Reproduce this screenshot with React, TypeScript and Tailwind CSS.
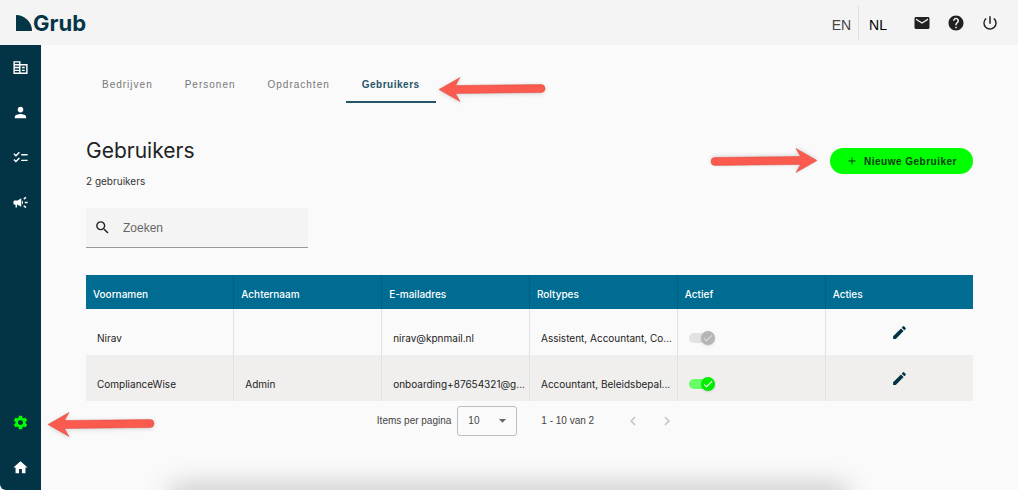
import { useState } from 'react';
import {
    MdAdd,
    MdArrowDropDown,
    MdCampaign,
    MdCheck,
    MdChecklist,
    MdChevronLeft,
    MdChevronRight,
    MdCorporateFare,
    MdEdit,
    MdEmail,
    MdHelp,
    MdHome,
    MdPerson,
    MdPowerSettingsNew,
    MdSearch,
    MdSettings,
} from 'react-icons/md';

const topItems = [
    { label: 'Bedrijven', icon: <MdCorporateFare /> },
    { label: 'Personen', icon: <MdPerson /> },
    { label: 'Opdrachten', icon: <MdChecklist /> },
    { label: 'Meldingen', icon: <MdCampaign /> },
];

const tabs = ['Bedrijven', 'Personen', 'Opdrachten', 'Gebruikers'];

const columns = ['Voornamen', 'Achternaam', 'E-mailadres', 'Roltypes', 'Actief', 'Acties'];

const users = [
    { first: 'Nirav', last: '', email: 'nirav@kpnmail.nl', roles: 'Assistent, Accountant, Co...', locked: true },
    {
        first: 'ComplianceWise',
        last: 'Admin',
        email: 'onboarding+87654321@g...',
        roles: 'Accountant, Beleidsbepal...',
        locked: false,
    },
];

function Arrow({ className }: { className: string }) {
    return (
        <svg viewBox="0 0 108 28" className={`h-7 w-[108px] drop-shadow-sm ${className}`} aria-hidden="true">
            <path
                d="M1 14.5 22 2.5 17.5 10.5 103 9.5a3.8 3.8 0 0 1 0 8L17.5 18.5 22 26.5Z"
                fill="#fb5a4e"
                stroke="#d9483f"
                strokeWidth="0.5"
            />
        </svg>
    );
}

function Header() {
    return (
        <header className="flex h-[45px] items-center justify-between bg-[#f4f4f4] pl-4 pr-[19px] text-[#212121]">
            <a href="#" className="flex items-center gap-px text-[#053647]">
                <svg viewBox="0 0 16 16" className="size-4" aria-hidden="true">
                    <path d="M0 0A16 16 0 0 1 16 16H0Z" fill="currentColor" />
                </svg>
                <span className="text-[22px] font-bold leading-6">Grub</span>
            </a>
            <div className="flex items-center">
                <div className="mr-[26px] flex items-center font-['Liberation_Sans',sans-serif] text-sm">
                    <button className="pr-[7px] pt-1 text-[#444]">EN</button>
                    <span className="h-[34px] w-px bg-[#e0e0e0]" />
                    <button className="pl-2.5 pt-1 text-black">NL</button>
                </div>
                <div className="flex gap-4 text-lg">
                    <button aria-label="Berichten">
                        <MdEmail />
                    </button>
                    <button aria-label="Help">
                        <MdHelp />
                    </button>
                    <button aria-label="Uitloggen">
                        <MdPowerSettingsNew />
                    </button>
                </div>
            </div>
        </header>
    );
}

function SideItem({ label, children, active }: { label: string; children: React.ReactNode; active?: boolean }) {
    return (
        <a
            href="#"
            aria-label={label}
            className={`flex h-[45px] items-center justify-center text-[17px] ${active ? 'text-[#00ff00]' : 'text-white'}`}
        >
            {children}
        </a>
    );
}

function Sidebar() {
    return (
        <nav className="flex w-[41px] shrink-0 flex-col justify-between rounded-bl-md bg-[#033445] pr-px">
            <div>
                {topItems.map((item) => (
                    <SideItem key={item.label} label={item.label}>
                        {item.icon}
                    </SideItem>
                ))}
            </div>
            <div className="relative">
                <SideItem label="Instellingen" active>
                    <MdSettings />
                </SideItem>
                <Arrow className="absolute left-[47px] top-2.5" />
                <SideItem label="Home">
                    <MdHome />
                </SideItem>
            </div>
        </nav>
    );
}

function Tabs() {
    return (
        <div className="flex items-end font-['Liberation_Sans',sans-serif] text-[10px] leading-4">
            <div role="tablist" className="flex">
                {tabs.map((tab) => (
                    <button
                        key={tab}
                        role="tab"
                        aria-selected={tab === 'Gebruikers'}
                        className={`border-b-2 px-4 pb-2 ${
                            tab === 'Gebruikers'
                                ? 'border-[#265569] font-bold tracking-wider text-[#265569]'
                                : 'border-transparent tracking-[1px] text-[#777]'
                        }`}
                    >
                        {tab}
                    </button>
                ))}
            </div>
            <Arrow className="ml-0.5" />
        </div>
    );
}

function Toggle({ name, locked }: { name: string; locked: boolean }) {
    const [on, setOn] = useState(true);
    return (
        <label className="relative flex h-4 w-[26px] items-center">
            <input
                type="checkbox"
                checked={on}
                disabled={locked}
                onChange={() => setOn(!on)}
                aria-label={`${name} actief`}
                className="h-2.5 w-full appearance-none rounded-full bg-[#66ff66] disabled:bg-[#e2e2e2]"
            />
            <span
                className={`absolute flex size-3.5 items-center justify-center rounded-full text-xs shadow-sm ${
                    on ? 'right-0' : 'left-0'
                } ${locked ? 'bg-[#b5b5b5] text-[#dedede]' : 'bg-[#00ec00] text-white'}`}
            >
                <MdCheck />
            </span>
        </label>
    );
}

function UsersTable() {
    return (
        <table className="mt-[27px] w-full table-fixed border-collapse text-left text-[10px] leading-4">
            <thead>
                <tr className="h-[34px] bg-[#006c92] text-white">
                    {columns.map((column) => (
                        <th key={column} className="border-r border-[#00617f] px-[7px] pt-1 font-medium last:border-r-0">
                            {column}
                        </th>
                    ))}
                </tr>
            </thead>
            <tbody className="text-[#222]">
                {users.map((user) => (
                    <tr key={user.first} className="h-[46px] even:bg-[#f0efee] [&>td]:border-r [&>td]:border-[#e2e2e2] [&>td:last-child]:border-r-0">
                        {[user.first, user.last, user.email, user.roles].map((text, i) => (
                            <td key={i} className="truncate pl-[11px] pt-3">
                                {text}
                            </td>
                        ))}
                        <td className="pl-[11px] pt-3">
                            <Toggle name={user.first} locked={user.locked} />
                        </td>
                        <td className="text-center">
                            <button aria-label={`${user.first} bewerken`} className="align-middle text-[17px] text-[#033445]">
                                <MdEdit />
                            </button>
                        </td>
                    </tr>
                ))}
            </tbody>
        </table>
    );
}

function Pagination() {
    return (
        <div className="mt-[5px] flex items-center justify-center font-['Liberation_Sans',sans-serif] text-[10px] leading-3 text-[#444]">
            <label htmlFor="page-size">Items per pagina</label>
            <div className="relative ml-1.5">
                <select
                    id="page-size"
                    className="h-[30px] w-[60px] appearance-none rounded-[3px] border border-[#bdbdbd] bg-transparent pl-2.5"
                >
                    <option>10</option>
                </select>
                <MdArrowDropDown className="pointer-events-none absolute right-1.5 top-1.5 text-[17px] text-[#666]" />
            </div>
            <span className="ml-6">1 - 10 van 2</span>
            <button disabled aria-label="Vorige pagina" className="ml-[30px] text-[18px] text-[#c4c4c4]">
                <MdChevronLeft />
            </button>
            <button disabled aria-label="Volgende pagina" className="ml-4 mr-1.5 text-[18px] text-[#c4c4c4]">
                <MdChevronRight />
            </button>
        </div>
    );
}

export default function App() {
    return (
        <div className="flex min-h-screen bg-white pb-[7px] pr-1.5 font-['Inter',sans-serif]">
            <div className="relative flex flex-1 flex-col overflow-hidden bg-[#fafafa]">
                <Header />
                <div className="flex flex-1">
                    <Sidebar />
                    <main className="min-w-0 flex-1 px-[45px] pt-[30px]">
                        <Tabs />
                        <div className="mt-[34px] flex items-start justify-between">
                            <div>
                                <h1 className="text-[21px] leading-7 text-[#222]">Gebruikers</h1>
                                <p className="mt-2 text-[10px] leading-4 text-[#333]">2 gebruikers</p>
                            </div>
                            <div className="flex items-center gap-3 pt-2.5">
                                <Arrow className="rotate-180" />
                                <button className="flex h-[26px] items-center gap-1.5 rounded-full bg-[#00ff00] px-4 font-['Liberation_Sans',sans-serif] text-[10px] font-bold tracking-wider text-[#0b3b12]">
                                    <MdAdd className="text-xs" />
                                    Nieuwe Gebruiker
                                </button>
                            </div>
                        </div>
                        <label className="mt-[19px] flex h-10 w-[222px] items-center gap-3 border-b border-[#999] bg-[#f4f4f4] px-2">
                            <MdSearch className="text-[17px] text-[#222]" />
                            <input
                                type="search"
                                placeholder="Zoeken"
                                aria-label="Zoeken"
                                className="min-w-0 flex-1 bg-transparent font-['Liberation_Sans',sans-serif] text-xs outline-none placeholder:text-[#666]"
                            />
                        </label>
                        <UsersTable />
                        <Pagination />
                    </main>
                </div>
                <div className="pointer-events-none absolute inset-x-[175px] -bottom-3 h-2.5 shadow-[0_0_28px_4px_rgba(0,0,0,0.28)]" />
            </div>
        </div>
    );
}
